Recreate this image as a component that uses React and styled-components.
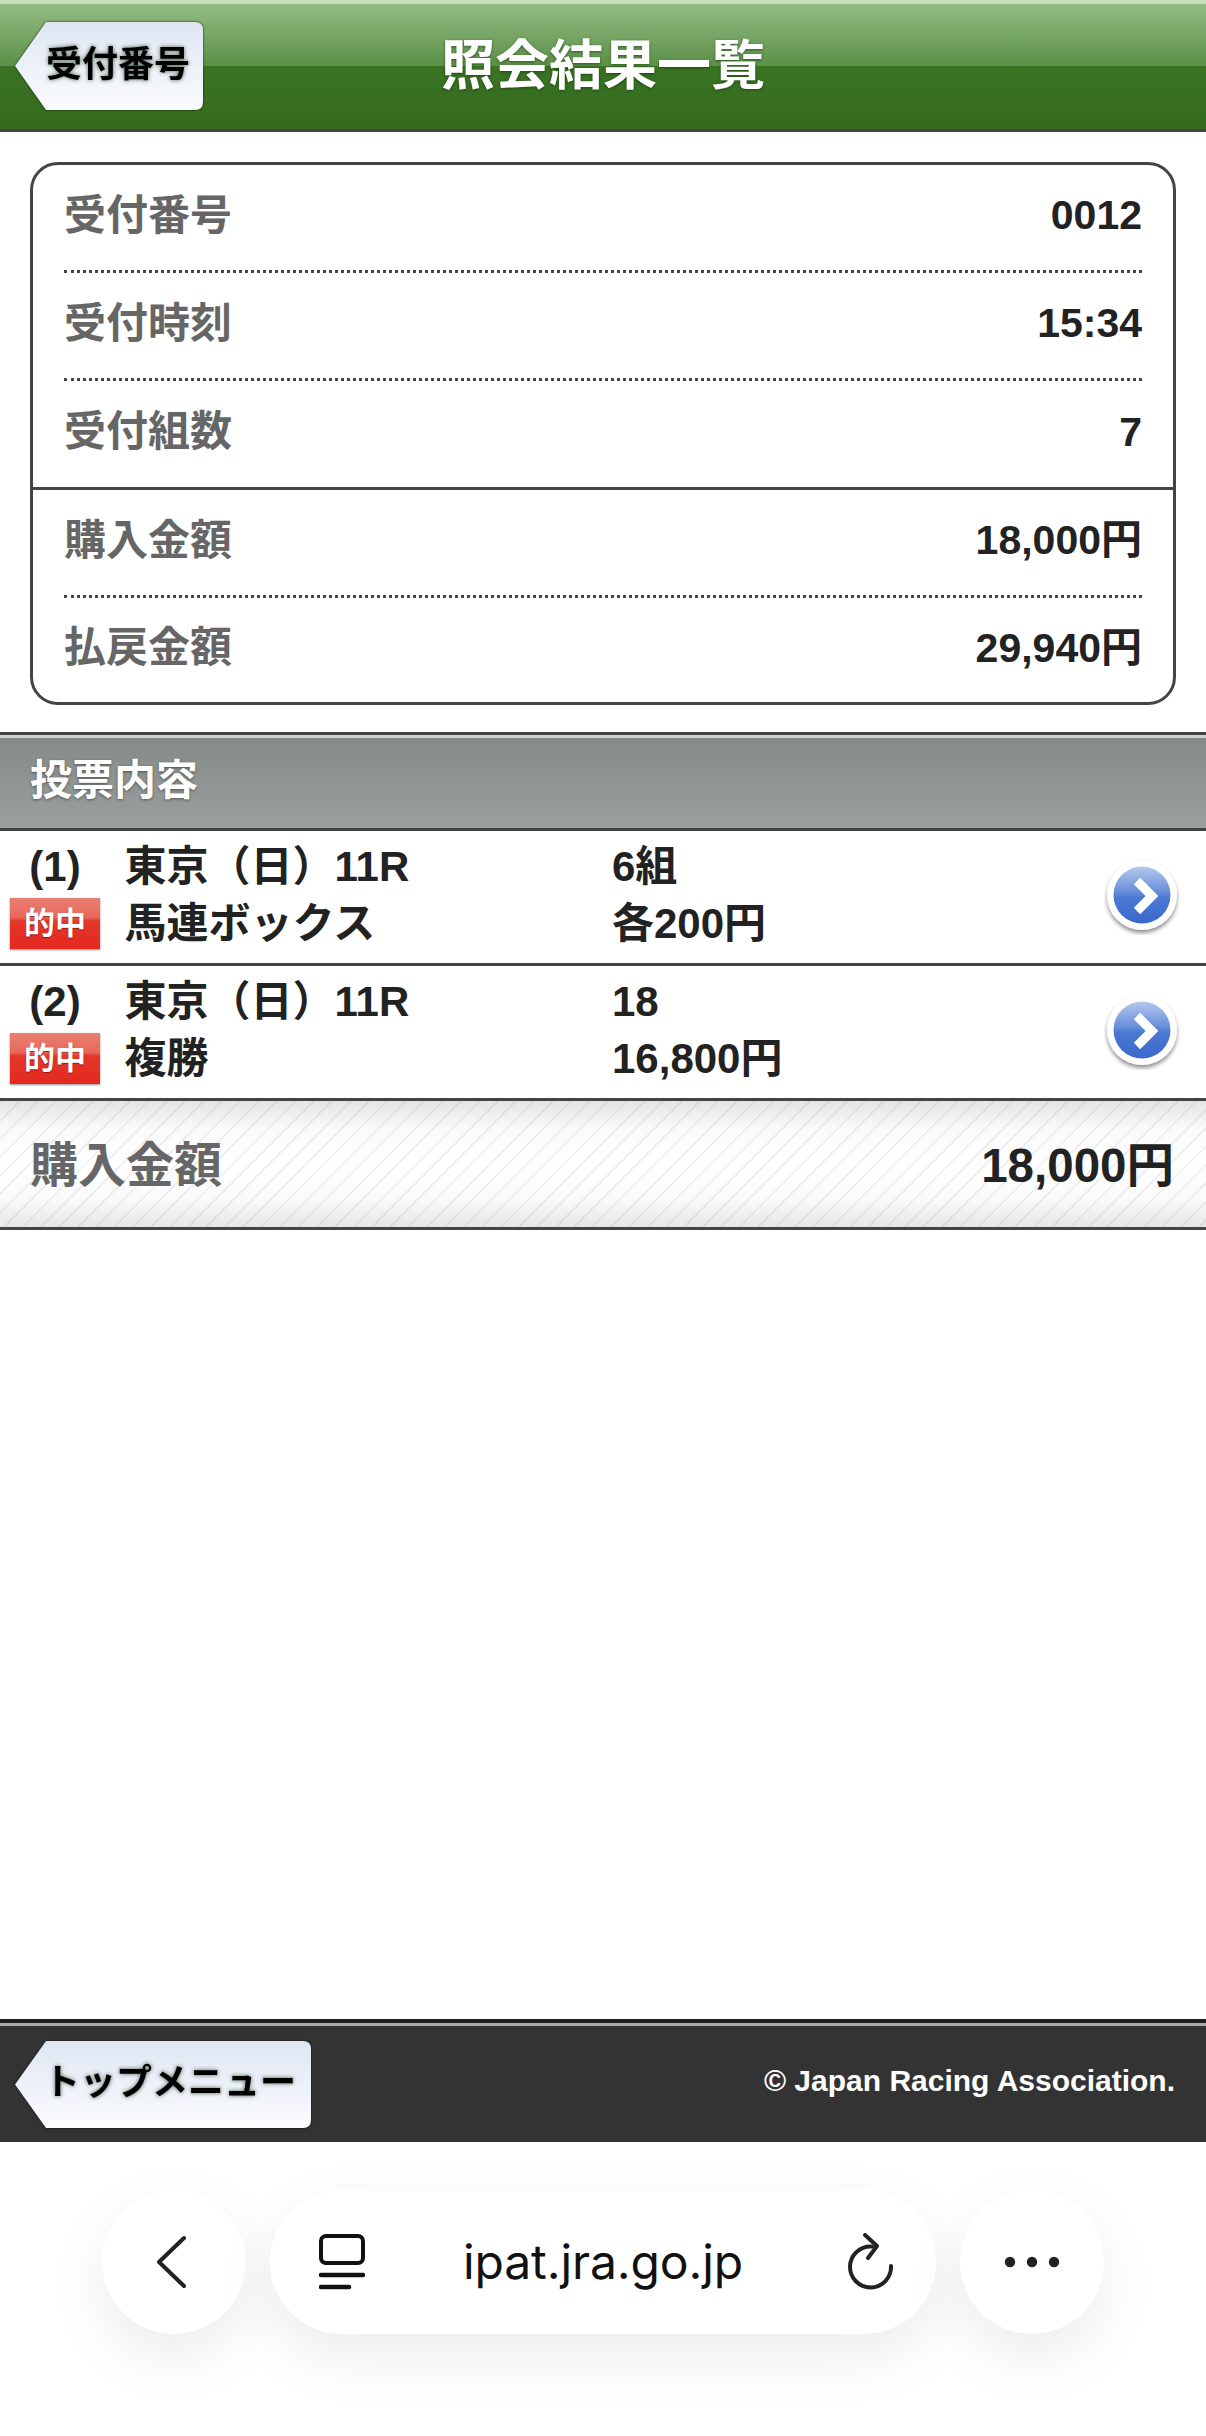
import React from 'react';
import styled, { createGlobalStyle } from 'styled-components';

const Global = createGlobalStyle`
  html, body { margin: 0; padding: 0; background: #fff; }
  body { font-family: "Liberation Sans", "Noto Sans CJK JP", sans-serif; font-weight: 700; color: #222; }
  * { box-sizing: border-box; }
`;

const Page = styled.div`
  width: 1206px;
  height: 2436px;
  display: flex;
  flex-direction: column;
  overflow: hidden;
  background: #fff;
`;

const Header = styled.header`
  position: relative;
  flex: none;
  height: 132px;
  display: flex;
  align-items: center;
  justify-content: center;
  padding-bottom: 2px;
  border-top: 4px solid #c6e0b8;
  border-bottom: 3px solid #444;
  background: linear-gradient(#93bd85 0, #5c8f47 62px, #3a7423 62px, #356a1e 100%);
`;

const Title = styled.h1`
  margin: 0;
  font-size: 54px;
  line-height: 60px;
  font-weight: 700;
  color: #fff;
  text-shadow: 0 1px 3px rgba(0, 40, 0, 0.55);
`;

const BackShape = styled.a`
  position: absolute;
  left: ${p => p.$left}px;
  top: ${p => p.$top}px;
  filter: drop-shadow(0 0 1px rgba(0, 0, 0, 0.8));
`;

const BackInner = styled.span`
  display: flex;
  align-items: center;
  width: ${p => p.$w}px;
  height: ${p => p.$h}px;
  padding-left: ${p => p.$pad}px;
  padding-bottom: 3px;
  font-size: 36px;
  line-height: 1;
  color: #000;
  white-space: nowrap;
  text-shadow: 0 0 4px rgba(20, 50, 20, 0.75);
  background: linear-gradient(#dfe6f2, #eef2f9 55%, #fbfcfe);
  clip-path: path('${p => `M31 0 H${p.$w - 8} Q${p.$w} 0 ${p.$w} 8 V${p.$h - 8} Q${p.$w} ${p.$h} ${p.$w - 8} ${p.$h} H31 L0 ${p.$h / 2} Z`}');
`;

const Summary = styled.section`
  flex: none;
  margin: 30px 30px 27px 30px;
  height: 543px;
  border: 3px solid #444;
  border-radius: 28px;
`;

const Group = styled.div`
  padding: 0 31px;
  & + & { border-top: 3px solid #444; }
`;

const InfoRow = styled.div`
  display: flex;
  align-items: center;
  justify-content: space-between;
  height: ${p => p.$h}px;
  padding-bottom: 4px;
  border-bottom: ${p => (p.$last ? 'none' : '3px dotted #444')};
`;

const InfoLabel = styled.span`
  font-size: 42px;
  line-height: 1;
  color: #666;
`;

const InfoValue = styled.span`
  font-size: 41px;
  line-height: 1;
  color: #222;
`;

const SectionBar = styled.div`
  flex: none;
  height: 99px;
  display: flex;
  align-items: center;
  padding: 0 0 1px 30px;
  border-top: 3px solid #444;
  border-bottom: 3px solid #444;
  box-shadow: inset 0 3px 0 #cfd3d0;
  background: linear-gradient(#858a88, #9aa09d);
  font-size: 42px;
  line-height: 1;
  color: #fff;
  text-shadow: 0 1px 3px rgba(0, 0, 0, 0.45);
`;

const BetRow = styled.div`
  flex: none;
  height: 135px;
  display: flex;
  align-items: center;
  justify-content: space-between;
  padding: 0 26px 4px 10px;
  border-bottom: 3px solid #444;
`;

const BetGrid = styled.div`
  display: grid;
  grid-template-columns: 90px 463px auto;
  grid-auto-rows: 57px;
  column-gap: 24.5px;
  align-items: center;
  font-size: 42px;
  line-height: 1;
  color: #222;
`;

const Index = styled.span`
  text-align: center;
`;

const Badge = styled.span`
  display: flex;
  align-items: center;
  justify-content: center;
  height: 51px;
  font-size: 31px;
  color: #fff;
  text-shadow: 0 1px 1px rgba(90, 0, 0, 0.6);
  box-shadow: 0 1px 2px rgba(0, 0, 0, 0.45);
  background: linear-gradient(#e97f72 0, #e8685a 38%, #e3372a 45%, #e4281f 100%);
`;

const TotalBar = styled.div`
  flex: none;
  height: 129px;
  display: flex;
  align-items: center;
  justify-content: space-between;
  padding: 3px 32px 0 30px;
  border-bottom: 3px solid #444;
  background:
    repeating-linear-gradient(135deg, rgba(0, 0, 0, 0.055) 0 2px, transparent 2px 13px),
    linear-gradient(#e4e4e4 0, #fafafa 22%, #fff 50%, #fafafa 78%, #e6e6e6 100%);
`;

const TotalLabel = styled.span`
  font-size: 48px;
  line-height: 1;
  color: #666;
`;

const TotalValue = styled.span`
  font-size: 47.5px;
  line-height: 1;
  color: #222;
`;

const Spacer = styled.div`
  flex: 1;
`;

const Footer = styled.footer`
  position: relative;
  flex: none;
  height: 123px;
  display: flex;
  align-items: center;
  justify-content: flex-end;
  padding: 0 31px 3px 0;
  border-top: 4px solid #1e1e1e;
  box-shadow: inset 0 3px 0 #aaa;
  background: #333;
`;

const Copyright = styled.span`
  font-size: 30px;
  color: #fff;
`;

const BrowserBar = styled.nav`
  flex: none;
  height: 294px;
  display: flex;
  justify-content: center;
  align-items: flex-start;
  gap: 24px;
  padding-top: 48px;
`;

const Round = styled.button`
  flex: none;
  width: 144px;
  height: 144px;
  padding: 0;
  border: 0;
  border-radius: 50%;
  display: flex;
  align-items: center;
  justify-content: center;
  background: #fff;
  box-shadow: 0 22px 60px rgba(0, 0, 0, 0.08);
`;

const Pill = styled.div`
  flex: none;
  width: 666px;
  height: 144px;
  border-radius: 72px;
  padding: 0 40px;
  display: grid;
  grid-template-columns: 1fr auto 1fr;
  align-items: center;
  background: #fff;
  box-shadow: 0 22px 60px rgba(0, 0, 0, 0.08);
`;

const Url = styled.span`
  font-family: Inter, "Liberation Sans", sans-serif;
  font-weight: 400;
  font-size: 48px;
  line-height: 1;
  color: #111;
  letter-spacing: -0.1px;
`;

const StartIcon = styled.svg`
  margin-left: 9px;
`;

const EndIcon = styled.svg`
  justify-self: end;
`;

const GoIcon = () => (
  <svg width="76" height="80" viewBox="-38 -40 76 80">
    <defs>
      <linearGradient id="go" x1="0" y1="0" x2="0" y2="1">
        <stop offset="0" stopColor="#b4c8ec" />
        <stop offset="0.42" stopColor="#6c92dc" />
        <stop offset="0.55" stopColor="#4a78d2" />
        <stop offset="1" stopColor="#3a68cc" />
      </linearGradient>
      <filter id="goShadow" x="-30%" y="-30%" width="160%" height="160%">
        <feDropShadow dx="0" dy="3" stdDeviation="2.2" floodColor="#000" floodOpacity="0.45" />
      </filter>
    </defs>
    <circle r="35" fill="#fff" filter="url(#goShadow)" />
    <circle r="28.5" fill="url(#go)" />
    <path d="M-5 -14 L10 1 L-5 16" fill="none" stroke="#fff" strokeWidth="9" strokeLinejoin="miter" />
  </svg>
);

const Bet = ({ n, a, b, c }) => (
  <BetRow>
    <BetGrid>
      <Index>({n})</Index>
      <span>東京（日）11R</span>
      <span>{a}</span>
      <Badge>的中</Badge>
      <span>{b}</span>
      <span>{c}</span>
    </BetGrid>
    <GoIcon />
  </BetRow>
);

export default function App() {
  return (
    <Page>
      <Global />
      <Header>
        <BackShape $left={15} $top={18}>
          <BackInner $w={188} $h={88} $pad={31}>受付番号</BackInner>
        </BackShape>
        <Title>照会結果一覧</Title>
      </Header>

      <Summary>
        <Group>
          <InfoRow $h={108}><InfoLabel>受付番号</InfoLabel><InfoValue>0012</InfoValue></InfoRow>
          <InfoRow $h={108}><InfoLabel>受付時刻</InfoLabel><InfoValue>15:34</InfoValue></InfoRow>
          <InfoRow $h={106} $last><InfoLabel>受付組数</InfoLabel><InfoValue>7</InfoValue></InfoRow>
        </Group>
        <Group>
          <InfoRow $h={108}><InfoLabel>購入金額</InfoLabel><InfoValue>18,000円</InfoValue></InfoRow>
          <InfoRow $h={104} $last><InfoLabel>払戻金額</InfoLabel><InfoValue>29,940円</InfoValue></InfoRow>
        </Group>
      </Summary>

      <SectionBar>投票内容</SectionBar>
      <Bet n={1} a="6組" b="馬連ボックス" c="各200円" />
      <Bet n={2} a="18" b="複勝" c="16,800円" />
      <TotalBar>
        <TotalLabel>購入金額</TotalLabel>
        <TotalValue>18,000円</TotalValue>
      </TotalBar>

      <Spacer />

      <Footer>
        <BackShape $left={15} $top={18}>
          <BackInner $w={296} $h={87} $pad={29}>トップメニュー</BackInner>
        </BackShape>
        <Copyright>© Japan Racing Association.</Copyright>
      </Footer>

      <BrowserBar>
        <Round aria-label="戻る">
          <svg width="36" height="56" viewBox="0 0 36 56">
            <path d="M31 4 L6 28 L31 52" fill="none" stroke="#222" strokeWidth="4" strokeLinecap="round" strokeLinejoin="round" transform="translate(-3 0)" />
          </svg>
        </Round>
        <Pill>
          <StartIcon width="46" height="56" viewBox="0 0 46 56">
            <rect x="2" y="2" width="42" height="27" rx="5" fill="none" stroke="#111" strokeWidth="4" />
            <path d="M2 41 H44 M2 53 H30" fill="none" stroke="#111" strokeWidth="4.5" strokeLinecap="round" />
          </StartIcon>
          <Url>ipat.jra.go.jp</Url>
          <EndIcon width="48" height="58" viewBox="0 0 48 58">
            <path d="M43 33 A20.5 20.5 0 1 1 24 13.5" fill="none" stroke="#222" strokeWidth="4" strokeLinecap="round" />
            <path d="M17 2 L29 13 L20 25" fill="none" stroke="#222" strokeWidth="4" strokeLinecap="round" strokeLinejoin="round" />
          </EndIcon>
        </Pill>
        <Round aria-label="その他">
          <svg width="56" height="12" viewBox="0 0 56 12">
            <circle cx="6" cy="6" r="5.2" fill="#222" />
            <circle cx="28" cy="6" r="5.2" fill="#222" />
            <circle cx="50" cy="6" r="5.2" fill="#222" />
          </svg>
        </Round>
      </BrowserBar>
    </Page>
  );
}
